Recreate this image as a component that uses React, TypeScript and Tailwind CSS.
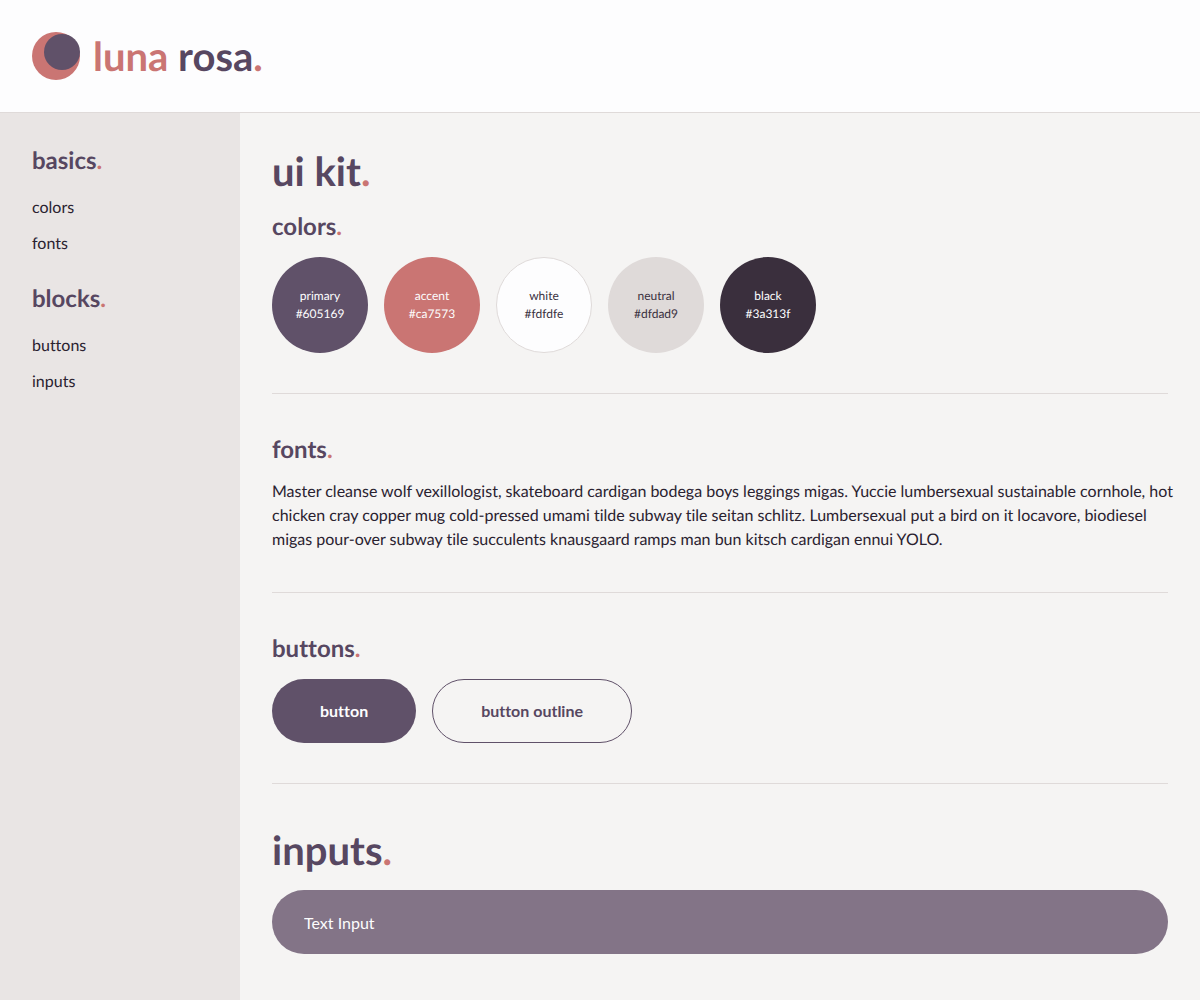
import React from "react";

function Dot() {
  return <span className="text-[#ca7573]">.</span>;
}

const swatches = [
  { name: "primary", hex: "#605169", style: "bg-[#605169] text-[#fdfdfe]" },
  { name: "accent", hex: "#ca7573", style: "bg-[#ca7573] text-[#fdfdfe]" },
  { name: "white", hex: "#fdfdfe", style: "bg-[#fdfdfe] text-[#3a313f] border border-[#dfdad9]" },
  { name: "neutral", hex: "#dfdad9", style: "bg-[#dfdad9] text-[#3a313f]" },
  { name: "black", hex: "#3a313f", style: "bg-[#3a2f3d] text-[#fdfdfe]" },
];

const menu = [
  { title: "basics", links: ["colors", "fonts"] },
  { title: "blocks", links: ["buttons", "inputs"] },
];

function Heading({ children }: { children: React.ReactNode }) {
  return (
    <h2 className="mb-3.5 text-2xl leading-8 font-bold text-[#574761]">
      {children}
      <Dot />
    </h2>
  );
}

export default function App() {
  return (
    <div className="flex min-h-screen flex-col bg-[#f5f4f3] font-['Lato',sans-serif] text-base leading-6 text-[#2a2230] [font-variant-ligatures:none] [text-rendering:geometricPrecision]">
      <header className="flex items-center gap-[13px] border-b border-[#dfdad9] bg-[#fdfdfe] px-8 py-8">
        <svg viewBox="0 0 48 48" className="size-12" aria-hidden="true">
          <circle cx="24" cy="24" r="24" fill="#ca7573" />
          <circle cx="30" cy="20" r="18" fill="#605169" />
        </svg>
        <div className="text-[40px] leading-12 font-bold text-[#574761]">
          <span className="text-[#ca7573]">luna</span> rosa
          <Dot />
        </div>
      </header>
      <div className="flex grow">
        <nav className="w-60 shrink-0 bg-[#e9e5e4] px-8 pt-8">
          {menu.map((group) => (
            <section key={group.title} className="mb-[27px]">
              <h2 className="mb-[19px] text-2xl leading-8 font-bold text-[#574761]">
                {group.title}
                <Dot />
              </h2>
              <ul className="flex flex-col gap-3">
                {group.links.map((link) => (
                  <li key={link}>
                    <a href={"#" + link}>{link}</a>
                  </li>
                ))}
              </ul>
            </section>
          ))}
        </nav>
        <main className="min-w-0 grow p-8">
          <h1 className="mb-3.5 text-[40px] leading-[52px] font-bold text-[#574761]">
            ui kit
            <Dot />
          </h1>
          <section id="colors" className="mb-10 border-b border-[#dfdad9] pb-10">
            <Heading>colors</Heading>
            <div className="flex flex-wrap gap-4">
              {swatches.map((s) => (
                <div
                  key={s.name}
                  className={"flex size-24 flex-col items-center justify-center rounded-full text-xs leading-[18px] " + s.style}
                >
                  <span>{s.name}</span>
                  <span>{s.hex}</span>
                </div>
              ))}
            </div>
          </section>
          <section id="fonts" className="mb-10 border-b border-[#dfdad9] pb-10">
            <Heading>fonts</Heading>
            <p className="-mr-2">
              Master cleanse wolf vexillologist, skateboard cardigan bodega boys leggings migas. Yuccie
              lumbersexual sustainable cornhole, hot chicken cray copper mug cold-pressed umami tilde subway
              tile seitan schlitz. Lumbersexual put a bird on it locavore, biodiesel migas pour-over subway
              tile succulents knausgaard ramps man bun kitsch cardigan ennui YOLO.
            </p>
          </section>
          <section id="buttons" className="mb-10 border-b border-[#dfdad9] pb-10">
            <Heading>buttons</Heading>
            <div className="flex flex-wrap gap-4">
              <button className="h-16 rounded-full bg-[#605169] px-12 font-bold text-[#fdfdfe]">button</button>
              <button className="h-16 rounded-full border border-[#605169] px-12 font-bold text-[#574761]">
                button outline
              </button>
            </div>
          </section>
          <section id="inputs">
            <h2 className="mb-3.5 text-[40px] leading-[52px] font-bold text-[#574761]">
              <label htmlFor="text-input">
                inputs
                <Dot />
              </label>
            </h2>
            <input
              id="text-input"
              type="text"
              placeholder="Text Input"
              className="h-16 w-full rounded-full bg-[#837487] px-8 text-[#fdfdfe] placeholder:text-[#fdfdfe]"
            />
          </section>
        </main>
      </div>
    </div>
  );
}
